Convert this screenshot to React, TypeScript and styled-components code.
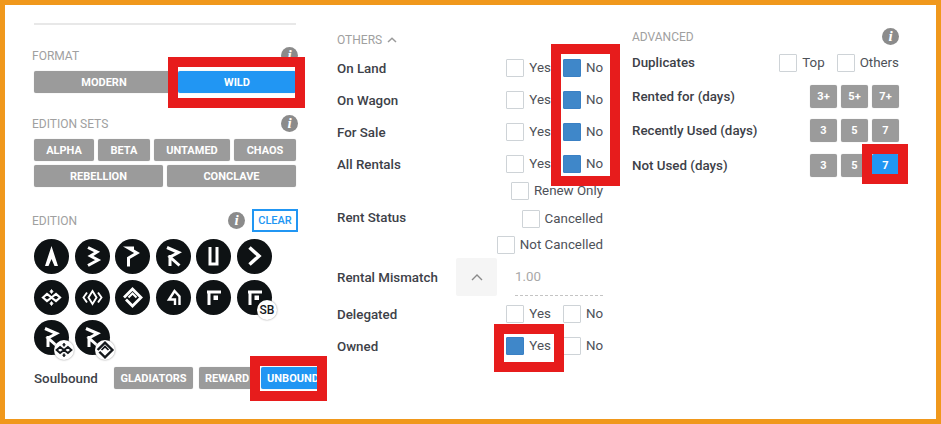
import React from 'react';
import styled, { createGlobalStyle } from 'styled-components';

const GlobalStyle = createGlobalStyle`
  html, body { margin: 0; padding: 0; background: #fff; }
  * { box-sizing: border-box; }
  body { font-family: Roboto, "Liberation Sans", sans-serif; }
`;

const Frame = styled.div`
  position: relative;
  width: 941px;
  height: 424px;
  border: 5px solid #f0981c;
  background: #fff;
  display: flex;
  overflow: hidden;
`;

const LeftColumn = styled.div`
  width: 262px;
  margin-left: 29px;
  padding-top: 18px;
  flex: none;
`;

const MiddleColumn = styled.div`
  width: 266px;
  margin-left: 41px;
  padding-top: 24px;
  flex: none;
`;

const RightColumn = styled.div`
  width: 267px;
  margin-left: 29px;
  padding-top: 23px;
  flex: none;
`;

const Divider = styled.div`
  height: 2px;
  background: #e8e8e8;
`;

const Section = styled.section`
  margin-top: 22px;
`;

const SectionHead = styled.div`
  display: flex;
  align-items: center;
  justify-content: space-between;
  margin-bottom: 7px;
  min-height: 17px;
`;

const HeadLabel = styled.span`
  font-size: 12px;
  line-height: 16px;
  color: #a0a0a0;
  display: inline-flex;
  align-items: center;
  gap: 5px;
`;

const LeftHeadLabel = styled(HeadLabel)`
  margin-left: -2px;
`;

const InfoIcon = styled.span<{ $overhang?: boolean }>`
  width: 17px;
  height: 17px;
  border-radius: 50%;
  background: #8b8b8b;
  color: #fff;
  font: italic 700 15px/17px "Liberation Serif", serif;
  text-align: center;
  flex: none;
  margin-right: ${(p) => (p.$overhang ? '-2px' : '0')};
`;

const HeadActions = styled.div`
  display: flex;
  align-items: center;
  gap: 7px;
  margin-right: -2px;
`;

const ClearButton = styled.button`
  width: 46px;
  height: 23px;
  border: 2px solid #2196f3;
  background: #fff;
  color: #2196f3;
  font: 500 11px Roboto, sans-serif;
  padding: 0;
`;

const ButtonRow = styled.div`
  display: flex;
  gap: 4px;
  & + & { margin-top: 4px; }
`;

const FilterButton = styled.button<{ $active?: boolean; $width?: number }>`
  height: 22px;
  flex: ${(p) => (p.$width ? `0 0 ${p.$width}px` : '1 1 0')};
  border: 0;
  border-radius: 2px;
  padding: 0;
  background: ${(p) => (p.$active ? '#2196f3' : '#9b9b9b')};
  color: #fff;
  font: 700 11px Roboto, sans-serif;
  box-shadow: 0 0 1px rgba(0, 0, 0, 0.25);
  white-space: nowrap;
`;

const EditionGrid = styled.div`
  display: grid;
  grid-template-columns: repeat(6, 35px);
  grid-auto-rows: 35px;
  column-gap: 5.6px;
  row-gap: 5.5px;
`;

const EditionIcon = styled.div`
  position: relative;
  width: 35px;
  height: 35px;
  border-radius: 50%;
  background: #0e1214;
`;

const Badge = styled.span`
  position: absolute;
  right: -5px;
  bottom: -5px;
  width: 20px;
  height: 20px;
  border-radius: 50%;
  background: #fff;
  box-shadow: 0 0 2px rgba(0, 0, 0, 0.45);
  color: #14181c;
  font: 500 12px/20px Roboto, sans-serif;
  text-align: center;
`;

const SoulboundRow = styled.div`
  display: flex;
  align-items: center;
  margin-top: 12px;
  gap: 6px;
`;

const SoulboundLabel = styled.span`
  flex: 0 0 74px;
  font-size: 13.33px;
  font-weight: 500;
  color: #3d4148;
  padding-top: 1px;
`;

const Row = styled.div<{ $height?: number }>`
  display: flex;
  align-items: center;
  justify-content: space-between;
  height: ${(p) => p.$height ?? 32}px;
`;

const RowLabel = styled.span`
  font-size: 13.33px;
  font-weight: 500;
  color: #3d4148;
  white-space: nowrap;
`;

const OthersHead = styled.div`
  height: 16px;
  margin-bottom: 7px;
`;

const Options = styled.div`
  display: flex;
  gap: 12px;
`;

const Option = styled.label`
  display: inline-flex;
  align-items: center;
  gap: 5px;
  font-size: 13.33px;
  line-height: 18px;
  color: #4d5158;
  white-space: nowrap;
`;

const CheckBox = styled.span<{ $checked?: boolean }>`
  width: 18px;
  height: 18px;
  flex: none;
  border: 1.5px solid ${(p) => (p.$checked ? '#3a80c4' : '#ced3d7')};
  background: ${(p) => (p.$checked ? '#3f87c9' : '#fff')};
  border-radius: 1px;
`;

const RightAligned = styled.div<{ $top: number }>`
  display: flex;
  justify-content: flex-end;
  margin-top: ${(p) => p.$top}px;
`;

const RentStatus = styled.div`
  display: flex;
  justify-content: space-between;
  align-items: flex-start;
  margin-top: 10px;
`;

const StatusOptions = styled.div`
  display: flex;
  flex-direction: column;
  align-items: flex-end;
  gap: 8px;
`;

const MismatchRow = styled.div`
  display: flex;
  align-items: center;
  height: 38px;
  margin-top: 4px;
  margin-bottom: 2px;
`;

const MismatchLabel = styled(RowLabel)`
  width: 119px;
`;

const StepButton = styled.div`
  width: 41px;
  height: 38px;
  background: #f5f5f5;
  border-radius: 2px;
  display: flex;
  align-items: center;
  justify-content: center;
`;

const MismatchInput = styled.div`
  margin-left: 18px;
  flex: 1;
  height: 38px;
  line-height: 37px;
  font-size: 13.33px;
  color: #a8a8a8;
  border-bottom: 1px dashed #c4c4c4;
`;

const AdvancedHead = styled(SectionHead)`
  margin-bottom: 1px;
`;

const DaysButtons = styled.div`
  display: flex;
  gap: 4px;
`;

const DayButton = styled(FilterButton)`
  flex: 0 0 27px;
  height: 23px;
`;

const DayRow = styled(Row)`
  height: 34.5px;
`;

const Annotation = styled.div<{ $x: number; $y: number; $w: number; $h: number }>`
  position: absolute;
  left: ${(p) => p.$x - 5}px;
  top: ${(p) => p.$y - 5}px;
  width: ${(p) => p.$w}px;
  height: ${(p) => p.$h}px;
  border: 10px solid #e71c1c;
  pointer-events: none;
`;

type GlyphProps = { name: string };

// rune shapes, drawn on a 35x35 box
const Glyph: React.FC<GlyphProps> = ({ name }) => {
  const s = { fill: 'none', stroke: '#fff', strokeWidth: 3, strokeLinejoin: 'miter' as const };
  const shapes: Record<string, React.ReactNode> = {
    alpha: <path d="M17.5 7 L24 27 L20.5 27 L17.5 20 L14.5 27 L11 27 Z" fill="#fff" />,
    beta: <path d="M13 8.5 L22 13 L15.5 17 L23 21 L13 26.5" {...s} />,
    promo: <path d="M13.5 27.5 V19 L22 14 L13.5 9 H19" {...s} />,
    reward: <path d="M11 8.5 L22.5 13.5 L14 18 L23.5 26.5 M14 16 V27" {...s} />,
    untamed: <path d="M14 8 V25 H21 V8" {...s} />,
    dice: <path d="M12.5 8.5 L22 17 L12.5 25.5" {...s} strokeWidth={3.5} />,
    chaos: (
      <g fill="none" stroke="#fff" strokeWidth={2.2}>
        <path d="M9 17.5 L13 14 L17.5 17.5 L13 21 Z M17.5 17.5 L22 14 L26 17.5 L22 21 Z" />
        <path d="M17.5 9.5 L19 11.5 L17.5 13.5 L16 11.5 Z M17.5 21.5 L19 23.5 L17.5 25.5 L16 23.5 Z" fill="#fff" strokeWidth={0.8} />
      </g>
    ),
    rebellion: (
      <g fill="none" stroke="#fff" strokeWidth={1.9}>
        <path d="M12 12.5 L8.5 17.5 L12 22.5 M23 12.5 L26.5 17.5 L23 22.5" />
        <path d="M17.5 11 L21.5 17.5 L17.5 24 L13.5 17.5 Z" />
      </g>
    ),
    conclave: (
      <g fill="none" stroke="#fff" strokeWidth={2.8}>
        <path d="M11 19.5 L17.5 26 L26 17.5 L17.5 9 L9 17.5" />
        <path d="M13.5 17.5 L17.5 13.5 L21.5 17.5" strokeWidth={2} />
      </g>
    ),
    tales: <path d="M19 25 V19.5 H13 L18.5 11 L23.5 16.5 V25" {...s} strokeWidth={2.4} />,
    foundation: (
      <g>
        <path d="M11 12 H25 M13 12 V25" {...s} />
        <rect x="17.5" y="15.5" width="4.5" height="4.5" fill="#fff" />
      </g>
    ),
  };
  return (
    <svg width="35" height="35" viewBox="0 0 35 35">
      {shapes[name]}
    </svg>
  );
};

const MiniChaos = () => (
  <svg width="20" height="20" viewBox="6 6 23 23" style={{ display: 'block' }}>
    <g fill="none" stroke="#14181c" strokeWidth={2.2}>
      <path d="M9 17.5 L13 14 L17.5 17.5 L13 21 Z M17.5 17.5 L22 14 L26 17.5 L22 21 Z" />
      <path d="M17.5 9.5 L19 11.5 L17.5 13.5 L16 11.5 Z M17.5 21.5 L19 23.5 L17.5 25.5 L16 23.5 Z" fill="#14181c" strokeWidth={0.8} />
    </g>
  </svg>
);

const MiniConclave = () => (
  <svg width="20" height="20" viewBox="6 6 23 23" style={{ display: 'block' }}>
    <g fill="none" stroke="#14181c" strokeWidth={2.8}>
      <path d="M11 19.5 L17.5 26 L26 17.5 L17.5 9 L9 17.5" />
      <path d="M13.5 17.5 L17.5 13.5 L21.5 17.5" strokeWidth={2} />
    </g>
  </svg>
);

const Check: React.FC<{ label: string; checked?: boolean }> = ({ label, checked }) => (
  <Option>
    <CheckBox $checked={checked} />
    {label}
  </Option>
);

const YesNoRow: React.FC<{ label: string; yes?: boolean; no?: boolean }> = ({ label, yes, no }) => (
  <Row>
    <RowLabel>{label}</RowLabel>
    <Options>
      <Check label="Yes" checked={yes} />
      <Check label="No" checked={no} />
    </Options>
  </Row>
);

const Days: React.FC<{ label: string; values: string[]; active?: string }> = ({ label, values, active }) => (
  <DayRow>
    <RowLabel>{label}</RowLabel>
    <DaysButtons>
      {values.map((v) => (
        <DayButton key={v} $active={v === active}>{v}</DayButton>
      ))}
    </DaysButtons>
  </DayRow>
);

const editions = ['alpha', 'beta', 'promo', 'reward', 'untamed', 'dice', 'chaos', 'rebellion', 'conclave', 'tales', 'foundation'];

export default function App() {
  return (
    <Frame>
      <GlobalStyle />
      <LeftColumn>
        <Divider />
        <Section>
          <SectionHead>
            <LeftHeadLabel>FORMAT</LeftHeadLabel>
            <InfoIcon $overhang>i</InfoIcon>
          </SectionHead>
          <ButtonRow>
            <FilterButton $width={140}>MODERN</FilterButton>
            <FilterButton $width={118} $active>WILD</FilterButton>
          </ButtonRow>
        </Section>
        <Section>
          <SectionHead>
            <LeftHeadLabel>EDITION SETS</LeftHeadLabel>
            <InfoIcon $overhang>i</InfoIcon>
          </SectionHead>
          <ButtonRow>
            <FilterButton $width={60}>ALPHA</FilterButton>
            <FilterButton $width={52}>BETA</FilterButton>
            <FilterButton $width={76}>UNTAMED</FilterButton>
            <FilterButton $width={62}>CHAOS</FilterButton>
          </ButtonRow>
          <ButtonRow>
            <FilterButton>REBELLION</FilterButton>
            <FilterButton>CONCLAVE</FilterButton>
          </ButtonRow>
        </Section>
        <Section>
          <SectionHead>
            <LeftHeadLabel>EDITION</LeftHeadLabel>
            <HeadActions>
              <InfoIcon>i</InfoIcon>
              <ClearButton>CLEAR</ClearButton>
            </HeadActions>
          </SectionHead>
          <EditionGrid>
            {editions.map((e) => (
              <EditionIcon key={e}><Glyph name={e} /></EditionIcon>
            ))}
            <EditionIcon>
              <Glyph name="foundation" />
              <Badge>SB</Badge>
            </EditionIcon>
            <EditionIcon>
              <Glyph name="reward" />
              <Badge><MiniChaos /></Badge>
            </EditionIcon>
            <EditionIcon>
              <Glyph name="reward" />
              <Badge><MiniConclave /></Badge>
            </EditionIcon>
          </EditionGrid>
          <SoulboundRow>
            <SoulboundLabel>Soulbound</SoulboundLabel>
            <FilterButton $width={79}>GLADIATORS</FilterButton>
            <FilterButton $width={56}>REWARD</FilterButton>
            <FilterButton $width={64} $active>UNBOUND</FilterButton>
          </SoulboundRow>
        </Section>
      </LeftColumn>

      <MiddleColumn>
        <OthersHead>
          <HeadLabel>
            OTHERS
            <svg width="10" height="6" viewBox="0 0 10 6">
              <path d="M1 5 L5 1.2 L9 5" fill="none" stroke="#9a9a9a" strokeWidth="1.5" />
            </svg>
          </HeadLabel>
        </OthersHead>
        <YesNoRow label="On Land" no />
        <YesNoRow label="On Wagon" no />
        <YesNoRow label="For Sale" no />
        <YesNoRow label="All Rentals" no />
        <RightAligned $top={2}>
          <Check label="Renew Only" />
        </RightAligned>
        <RentStatus>
          <RowLabel>Rent Status</RowLabel>
          <StatusOptions>
            <Check label="Cancelled" />
            <Check label="Not Cancelled" />
          </StatusOptions>
        </RentStatus>
        <MismatchRow>
          <MismatchLabel>Rental Mismatch</MismatchLabel>
          <StepButton>
            <svg width="12" height="8" viewBox="0 0 12 8">
              <path d="M1 7 L6 2 L11 7" fill="none" stroke="#8a8a8a" strokeWidth="1.4" />
            </svg>
          </StepButton>
          <MismatchInput>1.00</MismatchInput>
        </MismatchRow>
        <YesNoRow label="Delegated" />
        <YesNoRow label="Owned" yes />
      </MiddleColumn>

      <RightColumn>
        <AdvancedHead>
          <HeadLabel>ADVANCED</HeadLabel>
          <InfoIcon>i</InfoIcon>
        </AdvancedHead>
        <Row $height={33}>
          <RowLabel>Duplicates</RowLabel>
          <Options>
            <Check label="Top" />
            <Check label="Others" />
          </Options>
        </Row>
        <Days label="Rented for (days)" values={['3+', '5+', '7+']} />
        <Days label="Recently Used (days)" values={['3', '5', '7']} />
        <Days label="Not Used (days)" values={['3', '5', '7']} active="7" />
      </RightColumn>

      <Annotation $x={168} $y={57} $w={137} $h={51} />
      <Annotation $x={551} $y={44} $w={69} $h={142} />
      <Annotation $x={494} $y={324} $w={70} $h={48} />
      <Annotation $x={862} $y={144} $w={46} $h={40} />
      <Annotation $x={250} $y={356} $w={77} $h={45} />
    </Frame>
  );
}
